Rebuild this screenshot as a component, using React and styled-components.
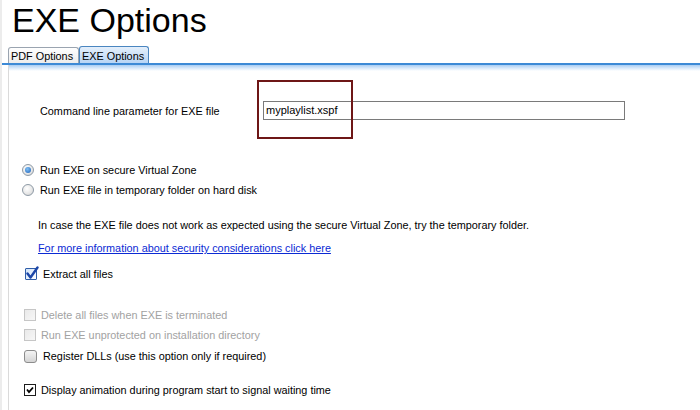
import React from "react";
import styled, { createGlobalStyle, css } from "styled-components";

const GlobalStyle = createGlobalStyle`
  html, body {
    margin: 0;
    padding: 0;
    background: #ffffff;
  }
  body {
    font-family: "Liberation Sans", Arial, sans-serif;
    font-size: 10.85px;
    color: #000;
  }
`;

const Page = styled.div`
  width: 700px;
  height: 410px;
  overflow: hidden;
  position: relative;
  border-left: 2px solid #ececec;
  box-sizing: border-box;
`;

const Title = styled.h1`
  margin: 1px 0 0 10px;
  font-family: "Liberation Sans", Arial, sans-serif;
  font-weight: normal;
  font-size: 34px;
  line-height: 39px;
  height: 39px;
`;

const TabStrip = styled.div`
  display: flex;
  align-items: flex-end;
  margin-top: 6px;
  padding-left: 6px;
  height: 17px;
  border-bottom: 2px solid #3d8ad6;
`;

const Tab = styled.div`
  height: 16px;
  box-sizing: border-box;
  padding: 1px 0 0 2px;
  line-height: 14px;
  border: 1px solid #9aa4b0;
  border-bottom: none;
  border-radius: 3px 3px 0 0;
  background: linear-gradient(#ffffff, #ececec);
  color: #000;
  ${(p) =>
    p.$active &&
    css`
      height: 17px;
      border-color: #4a86c0;
      background: linear-gradient(#e4effb, #b8d5f5);
      padding-top: 2px;
    `}
`;

const Panel = styled.div`
  display: flow-root;
  margin-left: 6px;
  border-left: 1px solid #dadada;
  height: 400px;
  background: linear-gradient(#a9cdf3 0px, #d7e8fa 3px, #ffffff 6px);
`;

const ParamRow = styled.div`
  position: relative;
  display: flex;
  align-items: center;
  height: 19px;
  margin-top: 36px;
  padding-left: 31px;
`;

const Label = styled.span`
  width: 223px;
`;

const TextBox = styled.div`
  width: 362px;
  height: 19px;
  box-sizing: border-box;
  border: 1px solid #7a7a7a;
  padding: 0 2px;
  line-height: 17px;
  font-size: 11px;
`;

const Highlight = styled.div`
  position: absolute;
  left: 248px;
  top: -21px;
  width: 96px;
  height: 59px;
  box-sizing: border-box;
  border: 2px solid #6e1616;
`;

const OptionRow = styled.div`
  display: flex;
  align-items: center;
  height: 20px;
  margin-top: ${(p) => p.$gap || 0}px;
  padding-left: ${(p) => p.$indent || 15}px;
  color: ${(p) => (p.$disabled ? "#a2a2a2" : "#000")};
`;

const OptionText = styled.span`
  margin-left: ${(p) => p.$space || 5}px;
`;

const Radio = styled.span`
  width: 12px;
  height: 12px;
  border-radius: 50%;
  border: 1px solid #8e9aa6;
  box-sizing: border-box;
  background: radial-gradient(circle at 40% 35%, #ffffff 0%, #e6e6e6 60%, #c9c9c9 100%);
  display: flex;
  align-items: center;
  justify-content: center;
  &::after {
    content: "";
    display: ${(p) => (p.$checked ? "block" : "none")};
    width: 6px;
    height: 6px;
    border-radius: 50%;
    background: radial-gradient(circle at 40% 35%, #7fc0f5, #1d5fb8);
  }
`;

const Note = styled.p`
  margin: 16px 0 0 29px;
  line-height: 19px;
`;

const Link = styled.a`
  display: block;
  margin: 4px 0 0 29px;
  line-height: 19px;
  color: #0b2ad4;
  text-decoration: underline;
`;

const boxKinds = {
  blue: css`
    border: 1px solid #2f5da8;
    background: linear-gradient(135deg, #cfe3fa, #ffffff);
    border-radius: 1px;
  `,
  disabled: css`
    border: 1px solid #c6c6c6;
    background: linear-gradient(135deg, #e9e9e9, #f7f7f7);
  `,
  round: css`
    border: 1px solid #8c8c8c;
    border-radius: 3px;
    background: linear-gradient(#f4f4f4, #d4d4d4);
  `,
  classic: css`
    border: 1px solid #1c1c1c;
    background: #ffffff;
  `,
};

const Box = styled.span`
  position: relative;
  width: ${(p) => p.$size || 12}px;
  height: ${(p) => p.$size || 12}px;
  box-sizing: border-box;
  flex: none;
  ${(p) => boxKinds[p.$kind]}
  svg {
    position: absolute;
    left: 0;
    top: 0;
  }
`;

const BlueCheck = () => (
  <svg width="14" height="14" viewBox="0 0 14 14" style={{ left: -1, top: -3 }}>
    <path d="M2.5 7.5 L5.5 11.5 L12.5 1.5" fill="none" stroke="#1b46a8" strokeWidth="2.4" strokeLinecap="round" strokeLinejoin="round" />
  </svg>
);

const BlackCheck = () => (
  <svg width="10" height="10" viewBox="0 0 10 10">
    <path d="M2 4.5 L4 7 L8 2.5" fill="none" stroke="#000" strokeWidth="1.8" />
  </svg>
);

export default function App() {
  return (
    <>
      <GlobalStyle />
      <Page>
        <Title>EXE Options</Title>
        <TabStrip>
          <Tab style={{ width: 71 }}>PDF Options</Tab>
          <Tab $active style={{ width: 70 }}>EXE Options</Tab>
        </TabStrip>
        <Panel>
          <ParamRow>
            <Label>Command line parameter for EXE file</Label>
            <TextBox>myplaylist.xspf</TextBox>
            <Highlight />
          </ParamRow>

          <OptionRow $gap={40} $indent={13}>
            <Radio $checked />
            <OptionText $space={6}>Run EXE on secure Virtual Zone</OptionText>
          </OptionRow>
          <OptionRow $indent={13}>
            <Radio />
            <OptionText $space={6}>Run EXE file in temporary folder on hard disk</OptionText>
          </OptionRow>

          <Note>In case the EXE file does not work as expected using the secure Virtual Zone, try the temporary folder.</Note>
          <Link href="#">For more information about security considerations click here</Link>

          <OptionRow $gap={6} $indent={16}>
            <Box $kind="blue" $size={12}>
              <BlueCheck />
            </Box>
            <OptionText $space={6}>Extract all files</OptionText>
          </OptionRow>

          <OptionRow $gap={21} $disabled>
            <Box $kind="disabled" />
            <OptionText>Delete all files when EXE is terminated</OptionText>
          </OptionRow>
          <OptionRow $disabled>
            <Box $kind="disabled" />
            <OptionText>Run EXE unprotected on installation directory</OptionText>
          </OptionRow>
          <OptionRow $gap={1}>
            <Box $kind="round" $size={13} />
            <OptionText $space={6}>Register DLLs (use this option only if required)</OptionText>
          </OptionRow>

          <OptionRow $gap={14}>
            <Box $kind="classic">
              <BlackCheck />
            </Box>
            <OptionText>Display animation during program start to signal waiting time</OptionText>
          </OptionRow>
        </Panel>
      </Page>
    </>
  );
}
